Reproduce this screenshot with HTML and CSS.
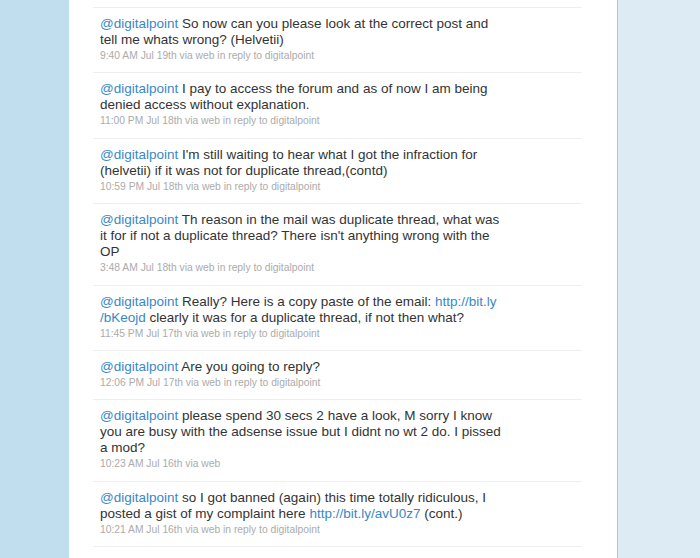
FILE: index.html
```html
<!DOCTYPE html>
<html>
<head>
<meta charset="utf-8">
<link rel="stylesheet" href="styles.css">
</head>
<body>
<div class="page">
  <div class="gutter"></div>
  <main class="main">
    <ol class="timeline">
      <li class="status">
        <p class="entry"><a class="user">@digitalpoint</a> <span>So now can you please look at the correct post and tell me whats wrong? (Helvetii)</span></p>
        <p class="meta">9:40 AM Jul 19th via web in reply to digitalpoint</p>
      </li>
      <li class="status">
        <p class="entry"><a class="user">@digitalpoint</a> <span>I pay to access the forum and as of now I am being denied access without explanation.</span></p>
        <p class="meta">11:00 PM Jul 18th via web in reply to digitalpoint</p>
      </li>
      <li class="status">
        <p class="entry"><a class="user">@digitalpoint</a> <span>I'm still waiting to hear what I got the infraction for (helvetii) if it was not for duplicate thread,(contd)</span></p>
        <p class="meta">10:59 PM Jul 18th via web in reply to digitalpoint</p>
      </li>
      <li class="status">
        <p class="entry"><a class="user">@digitalpoint</a> <span>Th reason in the mail was duplicate thread, what was it for if not a duplicate thread? There isn't anything wrong with the OP</span></p>
        <p class="meta">3:48 AM Jul 18th via web in reply to digitalpoint</p>
      </li>
      <li class="status">
        <p class="entry"><a class="user">@digitalpoint</a> <span>Really? Here is a copy paste of the email:</span> <a class="link">http://bit.ly<br>/bKeojd</a> <span>clearly it was for a duplicate thread, if not then what?</span></p>
        <p class="meta">11:45 PM Jul 17th via web in reply to digitalpoint</p>
      </li>
      <li class="status">
        <p class="entry"><a class="user">@digitalpoint</a> <span>Are you going to reply?</span></p>
        <p class="meta">12:06 PM Jul 17th via web in reply to digitalpoint</p>
      </li>
      <li class="status">
        <p class="entry"><a class="user">@digitalpoint</a> <span>please spend 30 secs 2 have a look, M sorry I know you are busy with the adsense issue but I didnt no wt 2 do. I pissed a mod?</span></p>
        <p class="meta">10:23 AM Jul 16th via web</p>
      </li>
      <li class="status">
        <p class="entry"><a class="user">@digitalpoint</a> <span>so I got banned (again) this time totally ridiculous, I posted a gist of my complaint here</span> <a class="link">http://bit.ly/avU0z7</a> <span>(cont.)</span></p>
        <p class="meta">10:21 AM Jul 16th via web in reply to digitalpoint</p>
      </li>
    </ol>
  </main>
  <aside class="sidebar"></aside>
</div>
</body>
</html>
```

FILE: styles.css
```css
html, body {
  margin: 0;
  padding: 0;
  height: 100%;
}
body {
  background: #c0deed;
  font-family: "Liberation Sans", Arial, sans-serif;
  overflow: hidden;
}
.page {
  display: flex;
  height: 558px;
}
.gutter {
  width: 69px;
  flex: none;
}
.main {
  width: 512px;
  flex: none;
  background: #ffffff;
  padding: 7px 12px 0 24px;
}
.sidebar {
  flex: 1;
  background: #ddebf4;
  border-left: 1px solid #a8cbe0;
}
.timeline {
  list-style: none;
  margin: 0;
  padding: 0;
  width: 489px;
  border-top: 1px solid #eeeeee;
}
.status {
  border-bottom: 1px solid #eeeeee;
  padding: 8px 7px 9px 7px;
}
.entry {
  margin: 0;
  width: 405px;
  font-size: 13.5px;
  line-height: 16px;
  color: #333333;
}
.user, .link {
  color: #3a87c8;
  text-decoration: none;
}
.meta {
  margin: 0;
  font-size: 10.3px;
  line-height: 15.4px;
  color: #ababab;
}
```
